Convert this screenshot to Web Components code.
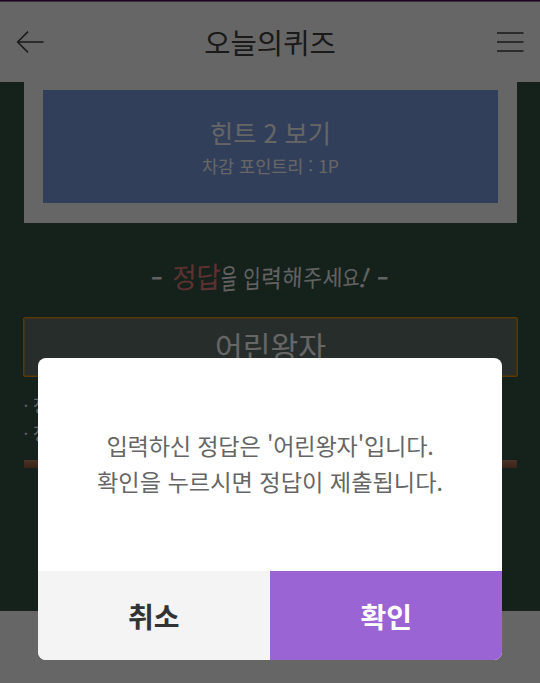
<!DOCTYPE html>
<html lang="ko">
<head>
<meta charset="utf-8">
<title>오늘의퀴즈</title>
<style>
  html, body { margin: 0; height: 100%; overflow: hidden; }
  body { background: #fff; font-family: "Noto Sans CJK KR", "Noto Sans", sans-serif; }
</style>
</head>
<body>
<quiz-page>
  <quiz-header>오늘의퀴즈</quiz-header>
  <quiz-board>
    <hint-button slot="hint">힌트 2 보기<span slot="cost">차감 포인트리 : 1P</span></hint-button>
    <answer-title slot="title"></answer-title>
    <answer-field slot="answer">어린왕자</answer-field>
    <span slot="note">· 정</span>
    <span slot="note">· 정</span>
  </quiz-board>
  <confirm-dialog slot="dialog">
    <div style="letter-spacing: -.2px">입력하신 정답은 '어린왕자'입니다.</div>
    <div>확인을 누르시면 정답이 제출됩니다.</div>
    <span slot="cancel">취소</span>
    <span slot="ok">확인</span>
  </confirm-dialog>
</quiz-page>

<script>
class QuizPage extends HTMLElement {
  constructor() {
    super();
    this.attachShadow({ mode: 'open' }).innerHTML = `
      <style>
        :host { display: block; position: relative; height: 683px; overflow: hidden; }
        .dim {
          position: absolute; inset: 0; box-sizing: border-box;
          display: flex; justify-content: center; align-items: flex-start;
          padding-top: 358px; background: rgba(0, 0, 0, .6);
        }
      </style>
      <slot></slot>
      <div class="dim"><slot name="dialog"></slot></div>
    `;
  }
}

class QuizHeader extends HTMLElement {
  constructor() {
    super();
    this.attachShadow({ mode: 'open' }).innerHTML = `
      <style>
        :host {
          display: flex; align-items: center; justify-content: space-between;
          box-sizing: border-box; height: 82.4px; padding: 1px 16px 0;
          background: linear-gradient(#48104f 1px, #8d7290 1px 2px, #fff 2px);
        }
        h1 { margin: 0; font-size: 28.6px; line-height: 40px; font-weight: 400; color: #414141; }
        svg { display: block; fill: none; stroke: #404040; }
      </style>
      <svg width="28" height="24" viewBox="0 0 28 24" stroke-width="1.5"><path d="M12 1.6 1.6 12 12 22.4M1.6 12H27.6"/></svg>
      <h1><slot></slot></h1>
      <svg width="28" height="24" viewBox="0 0 28 24" stroke-width="1.4"><path d="M1 3H27.5M1 12H27.5M1 21H27.5"/></svg>
    `;
  }
}

class QuizBoard extends HTMLElement {
  constructor() {
    super();
    this.attachShadow({ mode: 'open' }).innerHTML = `
      <style>
        :host {
          display: block; box-sizing: border-box; height: 529px;
          padding: 0 22.7px 0 23.6px; background: #355344;
        }
        .card { box-sizing: border-box; height: 140.2px; padding: 7.6px 19.6px 0; background: #fff; }
        .title { height: 94px; }
        .notes { display: flex; flex-direction: column; height: 83px; padding-top: 14px; box-sizing: border-box; }
        ::slotted([slot="note"]) { font-size: 17px; line-height: 28px; color: #fff; white-space: nowrap; }
        .ledge { height: 8px; background: linear-gradient(#b98466, #a8704f 40%, #8f5b3d); }
      </style>
      <div class="card"><slot name="hint"></slot></div>
      <div class="title"><slot name="title"></slot></div>
      <slot name="answer"></slot>
      <div class="notes"><slot name="note"></slot></div>
      <div class="ledge"></div>
    `;
  }
}

class HintButton extends HTMLElement {
  constructor() {
    super();
    this.attachShadow({ mode: 'open' }).innerHTML = `
      <style>
        :host {
          display: flex; flex-direction: column; align-items: center; box-sizing: border-box;
          height: 113px; padding-top: 24px; background: #7d9ee1; color: #fff;
        }
        .name { font-size: 25.2px; line-height: 36px; }
        .cost { font-size: 17.5px; line-height: 31px; }
      </style>
      <div class="name"><slot></slot></div>
      <div class="cost"><slot name="cost"></slot></div>
    `;
  }
}

// brush-like heading: every syllable has its own size, tilt and baseline
class AnswerTitle extends HTMLElement {
  constructor() {
    super();
    // [text, width, font size, x scale, rotation, y shift, class]
    const glyphs = [
      ['-', 20, 36, 1, 0, -2, ''],
      ['정', 25, 28, .95, -4, -2, 'red'],
      ['답', 23, 29, .92, -4, -3, 'red'],
      ['을', 18, 28, .62, -5, -1, ''],
      ['입', 18, 25, .76, -4, -1, 'gap'],
      ['력', 21, 25, .9, -3, -1, ''],
      ['해', 21, 23, .95, -2, -2, ''],
      ['주', 19, 24, .85, -5, -1, ''],
      ['세', 21, 22, 1, -4, -2, ''],
      ['요', 16, 22, .85, -6, -2, ''],
      ['!', 13, 27, 1, 16, -1, ''],
      ['-', 20, 36, 1, 0, -2, 'end']
    ];
    this.attachShadow({ mode: 'open' }).innerHTML = `
      <style>
        :host { display: flex; justify-content: center; padding-top: 35px; height: 40px; color: #f4f4f4; }
        span { display: flex; justify-content: center; line-height: 40px; white-space: nowrap; }
        .red { color: #e87a7c; }
        .gap, span:nth-of-type(2) { margin-left: 5px; }
        .end { margin-left: 1px; }
      </style>
      ${glyphs.map(([text, width, size, scale, angle, shift, cls]) => `<span class="${cls}" style="width:${width}px;font-size:${size}px;transform:translateY(${shift}px) rotate(${angle}deg) skewX(-5deg) scaleX(${scale})">${text}</span>`).join('')}
    `;
  }
}

class AnswerField extends HTMLElement {
  constructor() {
    super();
    this.attachShadow({ mode: 'open' }).innerHTML = `
      <style>
        :host {
          display: flex; align-items: center; justify-content: center; box-sizing: border-box;
          height: 60.4px; margin: 0 -.8px; padding-bottom: 2px; border: 1px solid #e0900c; border-radius: 2px;
          box-shadow: inset 0 0 0 1px #a87c30;
          background: #60726a; color: #fff; font-size: 30.2px; line-height: 44px;
        }
      </style>
      <slot></slot>
    `;
  }
}

class ConfirmDialog extends HTMLElement {
  constructor() {
    super();
    this.attachShadow({ mode: 'open' }).innerHTML = `
      <style>
        :host {
          display: flex; flex-direction: column; width: 464.6px; height: 302.4px;
          border-radius: 8px; overflow: hidden; background: #fff;
        }
        .message {
          flex: 1; box-sizing: border-box; padding-top: 69px; text-align: center;
          font-size: 23.2px; line-height: 36px; color: #666; white-space: nowrap;
        }
        .buttons { display: grid; grid-template-columns: 1fr 1fr; height: 89.8px; }
        button {
          border: 0; padding: 2px 0 0; font: 700 28px/40px "Noto Sans CJK KR", sans-serif;
          background: #f4f4f4; color: #333;
        }
        .ok { background: #9b64d4; color: #fff; }
      </style>
      <div class="message"><slot></slot></div>
      <div class="buttons">
        <button type="button"><slot name="cancel"></slot></button>
        <button type="button" class="ok"><slot name="ok"></slot></button>
      </div>
    `;
  }
}

customElements.define('quiz-page', QuizPage);
customElements.define('quiz-header', QuizHeader);
customElements.define('quiz-board', QuizBoard);
customElements.define('hint-button', HintButton);
customElements.define('answer-title', AnswerTitle);
customElements.define('answer-field', AnswerField);
customElements.define('confirm-dialog', ConfirmDialog);
</script>
</body>
</html>
